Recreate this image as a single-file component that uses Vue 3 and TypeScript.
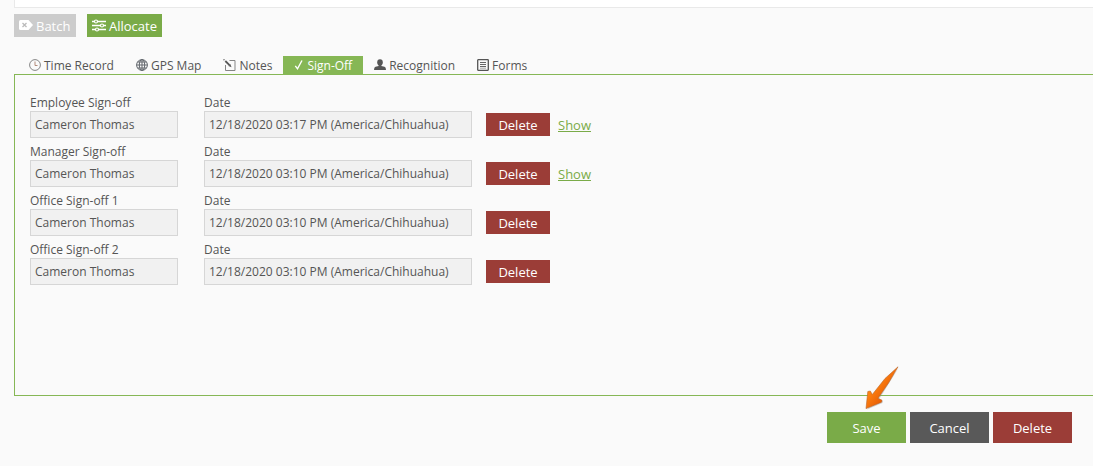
<script setup lang="ts">
import { ref } from 'vue'

interface SignOff {
  id: string
  label: string
  name: string
  date: string
  signature: boolean
}

const rows: SignOff[] = [
  { id: 'employee', label: 'Employee Sign-off', name: 'Cameron Thomas', date: '12/18/2020 03:17 PM (America/Chihuahua)', signature: true },
  { id: 'manager', label: 'Manager Sign-off', name: 'Cameron Thomas', date: '12/18/2020 03:10 PM (America/Chihuahua)', signature: true },
  { id: 'office1', label: 'Office Sign-off 1', name: 'Cameron Thomas', date: '12/18/2020 03:10 PM (America/Chihuahua)', signature: false },
  { id: 'office2', label: 'Office Sign-off 2', name: 'Cameron Thomas', date: '12/18/2020 03:10 PM (America/Chihuahua)', signature: false },
]

const tabs = ['Time Record', 'GPS Map', 'Notes', 'Sign-Off', 'Recognition', 'Forms']
const active = ref('Sign-Off')
</script>

<template>
  <main class="page">
    <div class="strip"></div>

    <div class="toolbar">
      <button type="button" class="btn tool muted" disabled>
        <svg width="14" height="10" viewBox="0 0 14 10" aria-hidden="true">
          <path d="M1.5 0H9.5L14 5L9.5 10H1.5Q0 10 0 8.500V1.500Q0 0 1.500 0Z" fill="#fff" />
          <path d="M3.500 3L7.500 7M7.500 3L3.500 7" stroke="#bbb" stroke-width="1.300" />
        </svg>
        <span>Batch</span>
      </button>
      <button type="button" class="btn tool green">
        <svg width="14" height="13" viewBox="0 0 14 13" fill="none" stroke="#fff" aria-hidden="true">
          <path d="M0 2.500H14M0 6.500H14M0 10.500H14" stroke-width="1.600" />
          <g fill="#7aab48" stroke-width="1.200">
            <circle cx="4" cy="2.500" r="1.500" />
            <circle cx="10" cy="6.500" r="1.500" />
            <circle cx="5" cy="10.500" r="1.500" />
          </g>
        </svg>
        <span>Allocate</span>
      </button>
    </div>

    <div class="tabs" role="tablist">
      <button
        v-for="tab in tabs"
        :key="tab"
        type="button"
        role="tab"
        class="tab"
        :class="{ active: tab === active }"
        :aria-selected="tab === active"
        @click="active = tab"
      >
        <svg v-if="tab === 'Time Record'" width="12" height="12" viewBox="0 0 12 12" fill="none" aria-hidden="true">
          <circle cx="6" cy="6" r="5.400" stroke="#858585" stroke-width="1" />
          <path d="M6 2.500V6.500H8.500" stroke="#b28b7a" stroke-width="1" />
        </svg>
        <svg v-else-if="tab === 'GPS Map'" width="12" height="12" viewBox="0 0 12 12" fill="none" stroke="#62676d" aria-hidden="true">
          <circle cx="6" cy="6" r="5.400" />
          <ellipse cx="6" cy="6" rx="2.700" ry="5.400" />
          <path d="M6 .6V11.400M.6 6H11.400M1.500 3H10.500M1.500 9H10.500" />
        </svg>
        <svg v-else-if="tab === 'Notes'" width="13" height="12" viewBox="0 0 13 12" fill="none" aria-hidden="true">
          <path d="M6.500 1.500H12V11.500H2.500V6" stroke="#858585" />
          <path d="M2.300 2L6.500 6.200" stroke="#555" stroke-width="1.800" />
          <path d="M8.500 8.300L5.400 7L7.300 5.100Z" fill="#555" />
          <path d="M.3 0L2 .5L.8 1.700Z" fill="#555" />
        </svg>
        <svg v-else-if="tab === 'Sign-Off'" width="10" height="12" viewBox="0 0 10 12" fill="none" aria-hidden="true">
          <path d="M1.300 6.800L3.500 9.800L8 1.500" stroke="#fff" stroke-width="1.400" />
        </svg>
        <svg v-else-if="tab === 'Recognition'" width="12" height="12" viewBox="0 0 12 12" fill="#555" aria-hidden="true">
          <ellipse cx="6" cy="3.400" rx="2.800" ry="3.100" />
          <path d="M4.700 5H7.300V7L10.500 7.800Q12 8.400 12 11H0Q0 8.400 1.500 7.800L4.700 7Z" />
        </svg>
        <svg v-else width="12" height="12" viewBox="0 0 12 12" fill="none" stroke="#555" aria-hidden="true">
          <rect x=".7" y=".7" width="10.600" height="10.600" rx=".5" stroke-width="1.300" />
          <path d="M3 3.500H9M3 5.500H9M3 7.500H9" stroke-width=".9" />
          <path d="M3 9.200H9" stroke-width=".5" />
        </svg>
        <span>{{ tab }}</span>
      </button>
    </div>

    <section class="panel" role="tabpanel">
      <div v-for="row in rows" :key="row.id" class="row">
        <div class="field name">
          <label :for="row.id + '-name'">{{ row.label }}</label>
          <input :id="row.id + '-name'" type="text" :value="row.name" readonly />
        </div>
        <div class="field date">
          <label :for="row.id + '-date'">Date</label>
          <input :id="row.id + '-date'" type="text" :value="row.date" readonly />
        </div>
        <button type="button" class="btn remove red">Delete</button>
        <a v-if="row.signature" href="#" class="show">Show</a>
      </div>
    </section>

    <footer class="actions">
      <div class="save-wrap">
        <button type="button" class="btn big green">Save</button>
        <svg class="pointer" width="38" height="46" viewBox="0 0 38 46" aria-hidden="true">
          <defs>
            <linearGradient id="flame" x1="0" y1="0" x2="1" y2="1">
              <stop offset=".35" stop-color="#ff8412" />
              <stop offset=".65" stop-color="#e95f06" />
            </linearGradient>
          </defs>
          <path d="M35.500 3L16 34.500L20 36L19.500 38L4 44.500Z" fill="#888" opacity=".35" />
          <path d="M35 1.800L25.500 18L15 33.300L19 35.200L18.500 37.200L3 43.600L4.800 26.500L7.300 26L9.300 29.500L22 13.500Z" fill="url(#flame)" stroke="#b86428" stroke-width=".6" />
        </svg>
      </div>
      <button type="button" class="btn big gray">Cancel</button>
      <button type="button" class="btn big red">Delete</button>
    </footer>
  </main>
</template>

<style>
body {
  background: #fafafa;
}
</style>

<style scoped>
.page {
  font-family: "Open Sans", "Noto Sans", sans-serif;
  font-size: 12px;
  line-height: 16px;
  color: #555;
  padding-left: 14px;
}
.strip {
  height: 7px;
  background: #fff;
  border: solid #e9e9e9;
  border-width: 0 0 1px 1px;
}
button,
input {
  font: inherit;
  color: inherit;
  margin: 0;
  box-sizing: border-box;
}
.btn {
  border: 0;
  padding: 0;
  color: #fff;
  font-size: 13px;
}
.green { background: #7aab48; }
.red { background: #9b3d37; }
.gray { background: #595959; }
.muted { background: #ccc; }
.toolbar {
  display: flex;
  gap: 11px;
  padding-top: 6px;
}
.tool {
  display: flex;
  align-items: center;
  gap: 3px;
  height: 23px;
  min-width: 62px;
  padding: 0 5px;
}
.tool svg {
  margin-bottom: 1px;
}
.tabs {
  display: flex;
  padding: 19px 0 0 4px;
}
.tab {
  display: flex;
  align-items: center;
  gap: 3px;
  height: 18px;
  padding: 2px 11px 0;
  border: 0;
  background: none;
}
.tab svg {
  margin-bottom: 2px;
}
.tab.active {
  background: #86b755;
  color: #fff;
}
.panel {
  border: solid #86b755;
  border-width: 1px 0 1px 1px;
  min-height: 322px;
  box-sizing: border-box;
  padding: 20px 15px;
}
.row {
  display: flex;
  align-items: flex-end;
  margin-bottom: 6px;
}
.field {
  display: flex;
  flex-direction: column;
}
.name {
  width: 148px;
  margin-right: 26px;
}
.date {
  width: 268px;
  margin-right: 14px;
}
.field input {
  width: 100%;
  height: 27px;
  padding: 0 4px;
  border: 1px solid #d6d6d6;
  background: #f1f1f1;
}
.remove {
  width: 64px;
  height: 23px;
  margin-bottom: 2px;
}
.show {
  margin: 0 0 5px 8px;
  font-size: 13px;
  color: #7aab48;
}
.actions {
  display: flex;
  justify-content: flex-end;
  gap: 4px;
  padding: 16px 21px 20px 0;
}
.big {
  width: 79px;
  height: 31px;
}
.save-wrap {
  position: relative;
}
.pointer {
  position: absolute;
  left: 36px;
  top: -47px;
}
</style>
